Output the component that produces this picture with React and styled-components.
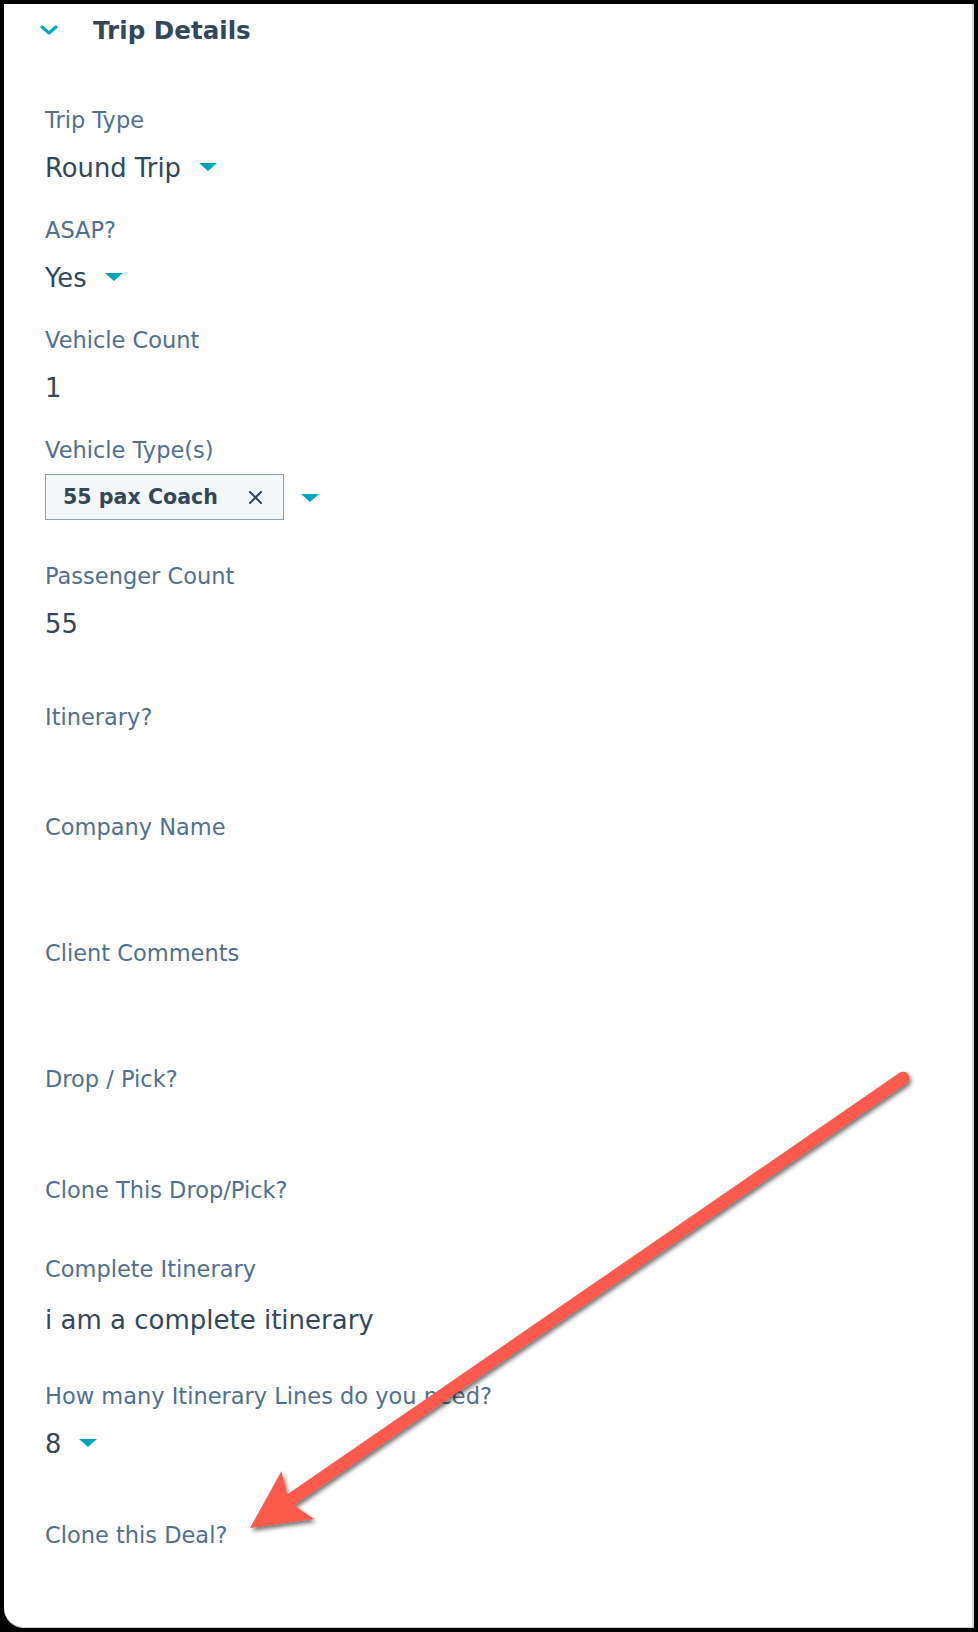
import React from 'react'
import styled, { createGlobalStyle } from 'styled-components'

const GlobalStyle = createGlobalStyle`
  html, body {
    margin: 0;
    padding: 0;
    background: #000;
  }
  body {
    font-family: 'DejaVu Sans', 'Noto Sans', sans-serif;
    -webkit-font-smoothing: antialiased;
  }
`

const Page = styled.div`
  position: relative;
  width: 978px;
  min-height: 1632px;
  box-sizing: border-box;
  padding: 4px;
  background: #000;
`

const Card = styled.div`
  box-sizing: border-box;
  width: 970px;
  height: 1624px;
  background: #fff;
  border-right: 2px solid #d4d4d4;
  border-bottom: 1px solid #cfcfcf;
  border-bottom-left-radius: 20px;
  padding: 7px 0 0 41px;
`

const Header = styled.div`
  display: flex;
  align-items: center;
  height: 40px;
  margin-left: -5px;
  margin-bottom: 51px;
`

const Chevron = styled.svg`
  width: 18px;
  height: 10px;
  margin-top: -3px;
  margin-right: 35px;
  flex: none;
`

const Title = styled.h2`
  margin: 0;
  font-size: 24.6px;
  line-height: 40px;
  font-weight: 700;
  color: #33475b;
`

const FieldList = styled.div`
  display: flex;
  flex-direction: column;
`

const Field = styled.div`
  display: flex;
  flex-direction: column;
  margin-bottom: 24px;
`

const Label = styled.div`
  font-size: 22.5px;
  line-height: 36px;
  color: #516f90;
  margin-bottom: 10px;
  white-space: nowrap;
`

const Value = styled.div`
  display: flex;
  align-items: flex-start;
  min-height: ${({ $space }) => $space}px;
  font-size: ${({ $size }) => $size || 25.8}px;
  line-height: ${({ $lh }) => $lh || 40}px;
  color: #33475b;
`

const Caret = styled.svg`
  width: 18px;
  height: 8px;
  margin-left: ${({ $gap }) => $gap || 18}px;
  margin-top: ${({ $top }) => $top || 15}px;
  flex: none;
`

const Tag = styled.div`
  box-sizing: border-box;
  display: flex;
  align-items: center;
  width: 239px;
  height: 46px;
  margin-top: -4px;
  padding: 0 20px 0 17px;
  background: #f5f8fa;
  border: 1.5px solid #8aa3bd;
  font-size: 20.6px;
  font-weight: 700;
  color: #33475b;
`

const TagText = styled.span`
  flex: 1;
  white-space: nowrap;
`

const Remove = styled.svg`
  width: 15px;
  height: 15px;
  flex: none;
`

const Arrow = styled.svg`
  position: absolute;
  top: 0;
  left: 0;
  width: 978px;
  height: 1632px;
  pointer-events: none;
`

const DropCaret = ({ gap, top }) => (
  <Caret viewBox="0 0 18 8" $gap={gap} $top={top}>
    <path d="M0 0 H18 L9 8 Z" fill="#00a4bd" />
  </Caret>
)

const fields = [
  { label: 'Trip Type', value: 'Round Trip', select: true },
  { label: 'ASAP?', value: 'Yes', select: true },
  { label: 'Vehicle Count', value: '1' },
  { label: 'Vehicle Type(s)', tag: '55 pax Coach', space: 56 },
  { label: 'Passenger Count', value: '55', space: 71 },
  { label: 'Itinerary?' },
  { label: 'Company Name', space: 56 },
  { label: 'Client Comments', space: 56 },
  { label: 'Drop / Pick?', space: 41 },
  { label: 'Clone This Drop/Pick?', space: 9 },
  {
    label: 'Complete Itinerary',
    value: 'i am a complete itinerary',
    space: 57,
    lh: 46,
    size: 26,
  },
  {
    label: 'How many Itinerary Lines do you need?',
    value: '8',
    select: true,
    space: 69,
  },
  { label: 'Clone this Deal?' },
]

export default function App() {
  return (
    <Page>
      <GlobalStyle />
      <Card>
        <Header>
          <Chevron viewBox="0 0 18 10">
            <path
              d="M2 2 L9 8 L16 2"
              fill="none"
              stroke="#00a4bd"
              strokeWidth="3"
              strokeLinecap="round"
              strokeLinejoin="round"
            />
          </Chevron>
          <Title>Trip Details</Title>
        </Header>
        <FieldList>
          {fields.map((f) => (
            <Field key={f.label}>
              <Label>{f.label}</Label>
              <Value $space={f.space || 40} $lh={f.lh} $size={f.size}>
                {f.tag && (
                  <>
                    <Tag>
                      <TagText>{f.tag}</TagText>
                      <Remove viewBox="0 0 15 15">
                        <path
                          d="M2 2 L13 13 M13 2 L2 13"
                          stroke="#33475b"
                          strokeWidth="2"
                          strokeLinecap="round"
                        />
                      </Remove>
                    </Tag>
                    <DropCaret gap={17} top={16} />
                  </>
                )}
                {f.value}
                {f.select && <DropCaret />}
              </Value>
            </Field>
          ))}
        </FieldList>
      </Card>
      {/* annotation arrow laid over the panel */}
      <Arrow viewBox="0 0 978 1632">
        <defs>
          <filter id="arrowShadow" x="-10%" y="-10%" width="120%" height="120%">
            <feDropShadow
              dx="2"
              dy="3"
              stdDeviation="2.2"
              floodColor="#000"
              floodOpacity="0.55"
            />
          </filter>
        </defs>
        <g filter="url(#arrowShadow)">
          <line
            x1="283"
            y1="1505"
            x2="903"
            y2="1078"
            stroke="#fd5a4c"
            strokeWidth="12.5"
            strokeLinecap="round"
          />
          <polygon
            points="250,1528 281.4,1471.2 289,1502 314.2,1519"
            fill="#fd5a4c"
          />
        </g>
      </Arrow>
    </Page>
  )
}
